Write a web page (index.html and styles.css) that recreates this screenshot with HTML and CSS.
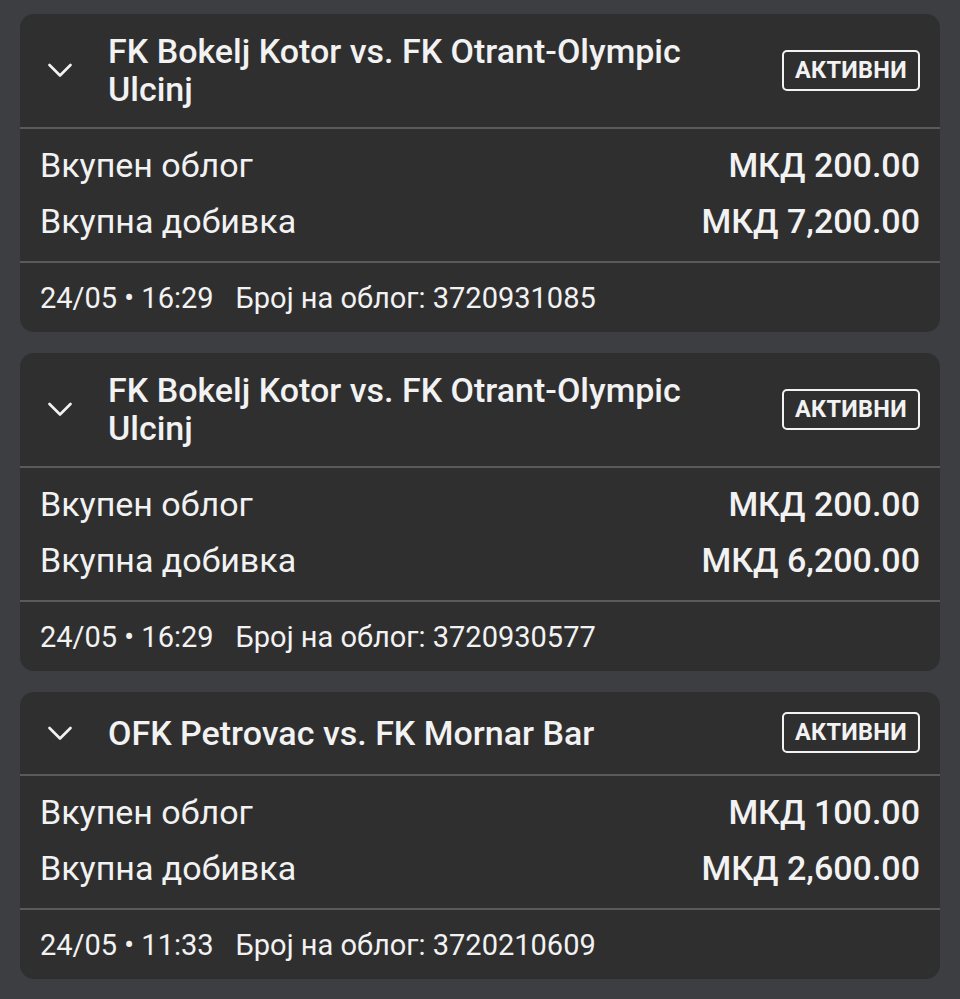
FILE: index.html
```html
<!DOCTYPE html>
<html>
<head>
    <title>Мои облози</title>
    <link rel="stylesheet" href="styles.css">
</head>
<body>
    <div class="list">
        <div class="card">
            <div class="card-head">
                <svg class="chevron" viewBox="0 0 24 24"><path d="M1.5 7 L12 17.5 L22.5 7"/></svg>
                <div class="title">FK Bokelj Kotor vs. FK Otrant-Olympic Ulcinj</div>
                <span class="badge">АКТИВНИ</span>
            </div>
            <div class="card-body">
                <div class="row"><span>Вкупен облог</span><span class="amount">МКД 200.00</span></div>
                <div class="row"><span>Вкупна добивка</span><span class="amount">МКД 7,200.00</span></div>
            </div>
            <div class="card-foot">
                <span>24/05 • 16:29</span>
                <span>Број на облог: 3720931085</span>
            </div>
        </div>

        <div class="card">
            <div class="card-head">
                <svg class="chevron" viewBox="0 0 24 24"><path d="M1.5 7 L12 17.5 L22.5 7"/></svg>
                <div class="title">FK Bokelj Kotor vs. FK Otrant-Olympic Ulcinj</div>
                <span class="badge">АКТИВНИ</span>
            </div>
            <div class="card-body">
                <div class="row"><span>Вкупен облог</span><span class="amount">МКД 200.00</span></div>
                <div class="row"><span>Вкупна добивка</span><span class="amount">МКД 6,200.00</span></div>
            </div>
            <div class="card-foot">
                <span>24/05 • 16:29</span>
                <span>Број на облог: 3720930577</span>
            </div>
        </div>

        <div class="card">
            <div class="card-head">
                <svg class="chevron" viewBox="0 0 24 24"><path d="M1.5 7 L12 17.5 L22.5 7"/></svg>
                <div class="title">OFK Petrovac vs. FK Mornar Bar</div>
                <span class="badge">АКТИВНИ</span>
            </div>
            <div class="card-body">
                <div class="row"><span>Вкупен облог</span><span class="amount">МКД 100.00</span></div>
                <div class="row"><span>Вкупна добивка</span><span class="amount">МКД 2,600.00</span></div>
            </div>
            <div class="card-foot">
                <span>24/05 • 11:33</span>
                <span>Број на облог: 3720210609</span>
            </div>
        </div>
    </div>
</body>
</html>
```

FILE: styles.css
```css
body {
    margin: 0;
    background-color: #3d3e42;
    font-family: Roboto, "Noto Sans", sans-serif;
    color: #f2f2f2;
}

.list {
    display: flex;
    flex-direction: column;
    gap: 21px;
    padding: 14px 20px;
}

.card {
    background-color: #2f2f30;
    border-radius: 14px;
    overflow: hidden;
}

.card-head {
    display: flex;
    align-items: center;
    min-height: 45px;
    padding: 18px 20px 19px;
    border-bottom: 2px solid #5a5a5b;
}

.chevron {
    width: 24px;
    height: 24px;
    margin-left: 8px;
    margin-right: 36px;
    flex-shrink: 0;
    fill: none;
    stroke: #f2f2f2;
    stroke-width: 2.6;
    stroke-linecap: round;
    stroke-linejoin: round;
}

.title {
    flex: 1;
    font-size: 34px;
    font-weight: 500;
    line-height: 38px;
    padding-right: 20px;
}

.badge {
    flex-shrink: 0;
    box-sizing: border-box;
    border: 2px solid #f2f2f2;
    border-radius: 5px;
    padding: 0 11px;
    height: 41px;
    line-height: 37px;
    font-size: 23.5px;
    font-weight: 700;
    letter-spacing: 0.3px;
}

.card-body {
    padding: 8px 20px 12px;
    border-bottom: 2px solid #5a5a5b;
}

.row {
    display: flex;
    justify-content: space-between;
    align-items: center;
    height: 56px;
    font-size: 34px;
}

.amount {
    font-weight: 500;
}

.card-foot {
    display: flex;
    gap: 22px;
    align-items: center;
    height: 69px;
    padding: 0 20px;
    font-size: 29px;
}
```
